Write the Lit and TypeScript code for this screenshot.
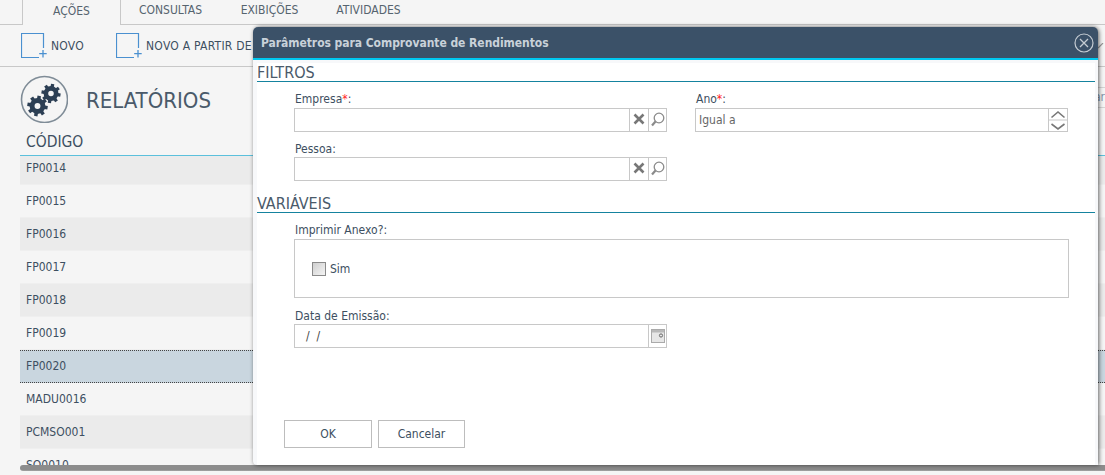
import { LitElement, html, css, svg } from "lit";
import { customElement } from "lit/decorators.js";

const gear = (cx: number, cy: number, r: number) => {
  const teeth = [];
  for (let i = 0; i < 8; i++) {
    teeth.push(svg`<rect x=${cx - r * 0.22} y=${cy - r * 1.28} width=${r * 0.44} height=${r * 0.6} transform="rotate(${i * 45 + 10} ${cx} ${cy})" fill="#2c3f54"/>`);
  }
  return svg`${teeth}<circle cx=${cx} cy=${cy} r=${r * 0.68} fill="none" stroke="#2c3f54" stroke-width=${r * 0.62}/>`;
};

const rows = ["FP0014", "FP0015", "FP0016", "FP0017", "FP0018", "FP0019", "FP0020", "MADU0016", "PCMSO001", "SO0010"];

@customElement("app-root")
export class AppRoot extends LitElement {
  static styles = css`
    :host { display: block; position: relative; width: 1105px; height: 475px; overflow: hidden; background: #f5f5f5; font-family: "DejaVu Sans Condensed", "Open Sans", sans-serif; font-size: 12px; color: #3d4f61; }
    .tabs { height: 24px; display: flex; padding-left: 22px; border-bottom: 1px solid #c8c8c8; color: #56646f; }
    .tab { width: 99px; height: 24px; display: flex; align-items: center; justify-content: center; padding-bottom: 4px; box-sizing: border-box; }
    .tab.active { height: 25px; padding-bottom: 3px; border-left: 1px solid #c8c8c8; border-right: 1px solid #c8c8c8; background: #f5f5f5; }
    .toolbar { height: 41px; display: flex; align-items: center; padding-left: 21px; border-bottom: 1px solid #c8c8c8; }
    .tool { display: flex; align-items: center; gap: 4px; margin-right: 32px; white-space: nowrap; letter-spacing: .25px; }
    .chev { margin-left: auto; margin-right: 1px; display: block; }
    .title { height: 63px; display: flex; align-items: center; padding-left: 20px; gap: 18px; font-size: 22px; color: #4a5a6a; }
    .title span { position: relative; top: 2px; }
    .search { margin-left: auto; width: 120px; height: 21px; box-sizing: border-box; border-top: 1px solid #d4d4d4; border-bottom: 1px solid #d4d4d4; font-size: 12px; line-height: 19px; text-align: right; color: #8497ad; white-space: nowrap; position: relative; top: -1px; }
    .head { margin-left: 20px; height: 25px; padding-left: 6px; border-bottom: 1px solid #5bc0dc; font-size: 15.5px; line-height: 25px; }
    .grid { margin-left: 20px; height: 309px; overflow: hidden; }
    .rows { margin-top: -4px; }
    .row { height: 33px; box-sizing: border-box; padding: 7px 0 0 6px; line-height: 18px; border-bottom: 1px solid #efefef; }
    .row:nth-child(odd) { background: #ebebeb; }
    .row.sel { background: #c9d6df; border-top: 1px dotted #444; border-bottom: 1px dotted #444; padding-top: 6px; }
    .sb { position: absolute; left: 20px; right: 0; top: 465px; height: 6px; border-radius: 3px 0 0 3px; background: linear-gradient(#8c8c8c 80%, #a8a8a8); }
    .modal { position: absolute; left: 253px; top: 27px; width: 845px; height: 438px; box-sizing: border-box; background: #f7f8fa; border-radius: 6px 6px 0 4px; box-shadow: 1px 0 4px rgba(0,0,0,.6); display: flex; flex-direction: column; }
    .mhead { height: 33px; flex: none; box-sizing: border-box; background: #3b5168; border-bottom: 2px solid #00c8f0; border-radius: 5px 5px 0 0; color: #c9d1d9; font-weight: 700; display: flex; align-items: center; justify-content: space-between; padding: 0 4px 0 8px; }
    .mhead span { letter-spacing: -0.05px; }
    .mhead svg { display: block; }
    .mbody { flex: 1; margin: 3px 3px 0 4px; padding-bottom: 17px; background: #fff; display: flex; flex-direction: column; }
    .sec { height: 19px; box-sizing: border-box; border-bottom: 1px solid #15839f; font-size: 16px; line-height: 20px; color: #4a5a6a; }
    .filters { display: grid; grid-template-columns: 373px 373px; column-gap: 28px; padding: 8px 0 0 37px; height: 104px; align-items: start; }
    .vars { padding: 8px 0 0 37px; }
    label { display: block; height: 18px; line-height: 18px; padding-left: 1px; }
    .gap { margin-top: 7px; padding-top: 2px; height: 16px; line-height: 16px; }
    label i { color: #f22; font-style: normal; }
    .inp { height: 24px; box-sizing: border-box; border: 1px solid #c8c8c8; display: flex; background: #fff; }
    .inp .f { flex: 1; padding-left: 3px; line-height: 22px; color: #666; }
    .inp .b { width: 18px; box-sizing: border-box; border-left: 1px solid #c8c8c8; display: flex; align-items: center; justify-content: center; }
    .inp .b.w { width: 19px; }
    .inp svg { display: block; }
    .box { width: 775px; height: 59px; box-sizing: border-box; border: 1px solid #c8c8c8; display: flex; align-items: center; padding-left: 17px; gap: 4px; }
    .box + .gap { margin-top: 8px; }
    .chk { width: 14px; height: 14px; box-sizing: border-box; border: 1px solid #8a8a8a; background: linear-gradient(135deg, #cfcfcf, #f4f4f4); }
    .date { width: 373px; }
    .date .f { padding-left: 11px; color: #444; }
    .btns { display: flex; gap: 6px; padding-left: 27px; margin-top: auto; }
    .btn { height: 28px; box-sizing: border-box; border: 1px solid #bdbdbd; background: #fff; display: flex; align-items: center; justify-content: center; }
    .ok { width: 88px; }
    .cancel { width: 87px; }
  `;

  private x() {
    return html`<svg width="14" height="14" viewBox="0 0 14 14"><path d="M2.5 1.5 11.5 10.5M11.5 1.5 2.5 10.5" stroke="#777" stroke-width="2.6" fill="none"/></svg>`;
  }
  private lens() {
    return html`<svg width="16" height="16" viewBox="0 0 16 16"><circle cx="9" cy="6" r="4.8" fill="none" stroke="#8b8b8b" stroke-width="1.3"/><path d="M5.5 9.5 2 13.5" stroke="#8b8b8b" stroke-width="2.2"/></svg>`;
  }
  private plus() {
    return html`<svg width="26" height="26" viewBox="0 0 26 26"><path d="M22.5 15V.5H.5v24H18" fill="none" stroke="#4a90d0" stroke-width="1.2"/><path d="M22 17v7.5M18.2 20.7h7.5" stroke="#4a90d0" stroke-width="1.3"/></svg>`;
  }

  render() {
    return html`
      <div class="tabs">
        <div class="tab active">AÇÕES</div>
        <div class="tab">CONSULTAS</div>
        <div class="tab">EXIBIÇÕES</div>
        <div class="tab">ATIVIDADES</div>
      </div>
      <div class="toolbar">
        <div class="tool">${this.plus()}NOVO</div>
        <div class="tool">${this.plus()}NOVO A PARTIR DE</div>
        <svg class="chev" width="6" height="6" viewBox="0 0 6 6"><path d="M0 5 5 0" stroke="#999" stroke-width="1.2"/></svg>
      </div>
      <div class="title">
        <svg width="48" height="48" viewBox="0 0 48 48">
          <circle cx="24.5" cy="24.5" r="23" fill="none" stroke="#7f8c97" stroke-width="1.6"/>
          ${gear(17.5, 31, 8)}${gear(31, 18.5, 7.5)}
        </svg>
        <span>RELATÓRIOS</span>
        <div class="search">Filtrar</div>
      </div>
      <div class="head">CÓDIGO</div>
      <div class="grid"><div class="rows">
        ${rows.map((r) => html`<div class="row ${r === "FP0020" ? "sel" : ""}">${r}</div>`)}
      </div></div>
      <div class="sb"></div>
      <div class="modal">
        <div class="mhead">
          <span>Parâmetros para Comprovante de Rendimentos</span>
          <svg width="20" height="20" viewBox="0 0 20 20"><circle cx="10" cy="10" r="9" fill="none" stroke="#c5ccd3" stroke-width="1.2"/><path d="M6 6l8 8M14 6l-8 8" stroke="#c5ccd3" stroke-width="1.3"/></svg>
        </div>
        <div class="mbody">
          <div class="sec">FILTROS</div>
          <div class="filters">
            <div>
              <label>Empresa<i>*</i>:</label>
              <div class="inp"><div class="f"></div><div class="b w">${this.x()}</div><div class="b">${this.lens()}</div></div>
              <label class="gap">Pessoa:</label>
              <div class="inp"><div class="f"></div><div class="b w">${this.x()}</div><div class="b">${this.lens()}</div></div>
            </div>
            <div>
              <label>Ano<i>*</i>:</label>
              <div class="inp"><div class="f">Igual a</div>
                <div class="b w"><svg width="18" height="22" viewBox="0 0 18 22"><path d="M2.5 8.5 9 3l6.5 5.5M2.5 15 9 20l6.5-5" fill="none" stroke="#777" stroke-width="1.6"/><path d="M0 11h18" stroke="#c8c8c8"/></svg></div>
              </div>
            </div>
          </div>
          <div class="sec">VARIÁVEIS</div>
          <div class="vars">
            <label>Imprimir Anexo?:</label>
            <div class="box"><div class="chk"></div><span>Sim</span></div>
            <label class="gap">Data de Emissão:</label>
            <div class="inp date"><div class="f">/ &nbsp;/</div>
              <div class="b"><svg width="14" height="14" viewBox="0 0 14 14"><rect x=".5" y=".5" width="13" height="13" fill="#e6e6e6" stroke="#aaa"/><path d="M1 1h12v2.5H1z" fill="#b8b8b8"/><circle cx="10" cy="6.5" r="1.6" fill="none" stroke="#666"/></svg></div>
            </div>
          </div>
          <div class="btns">
            <div class="btn ok">OK</div>
            <div class="btn cancel">Cancelar</div>
          </div>
        </div>
      </div>
    `;
  }
}
